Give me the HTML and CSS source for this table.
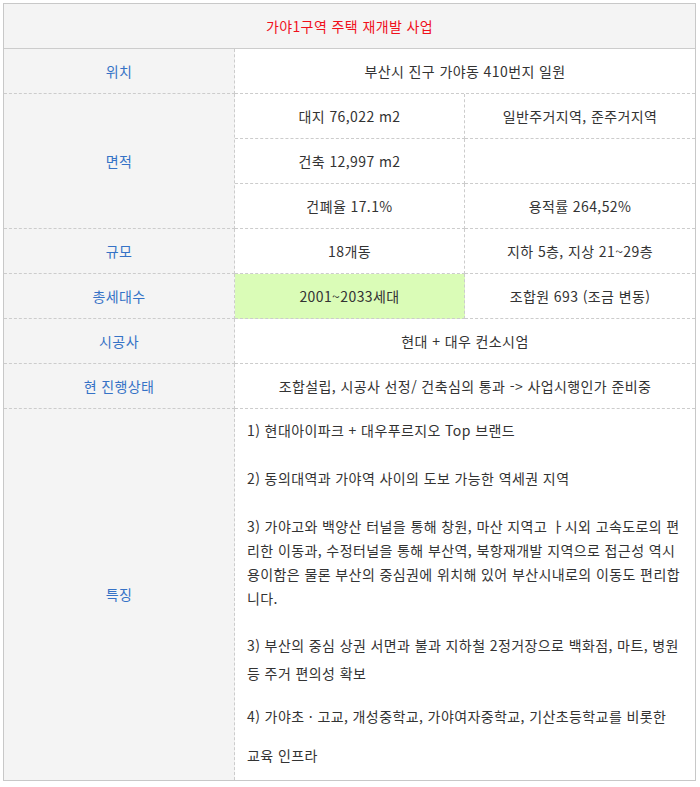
FILE: index.html
```html
<!DOCTYPE html>
<html lang="ko">
<head>
<meta charset="utf-8">
<title>가야1구역 주택 재개발 사업</title>
<link rel="stylesheet" href="styles.css">
</head>
<body>
<div class="tbl">
  <div class="cell head span3">가야1구역 주택 재개발 사업</div>

  <div class="cell label">위치</div>
  <div class="cell val span2">부산시 진구 가야동 410번지 일원</div>

  <div class="cell label rows3">면적</div>
  <div class="cell val">대지 76,022 m2</div>
  <div class="cell val end">일반주거지역, 준주거지역</div>
  <div class="cell val">건축 12,997 m2</div>
  <div class="cell val end"></div>
  <div class="cell val">건폐율 17.1%</div>
  <div class="cell val end">용적률 264,52%</div>

  <div class="cell label">규모</div>
  <div class="cell val">18개동</div>
  <div class="cell val end">지하 5층, 지상 21~29층</div>

  <div class="cell label">총세대수</div>
  <div class="cell val green">2001~2033세대</div>
  <div class="cell val end">조합원 693 (조금 변동)</div>

  <div class="cell label">시공사</div>
  <div class="cell val span2">현대 + 대우 컨소시엄</div>

  <div class="cell label">현 진행상태</div>
  <div class="cell val span2">조합설립, 시공사 선정/ 건축심의 통과 -&gt; 사업시행인가 준비중</div>

  <div class="cell label last">특징</div>
  <div class="cell desc span2 last">
    <p>1) 현대아이파크 + 대우푸르지오 Top 브랜드</p>
    <p>2) 동의대역과 가야역 사이의 도보 가능한 역세권 지역</p>
    <p class="p3">3) 가야고와 백양산 터널을 통해 창원, 마산 지역고 ㅏ시외 고속도로의 편<br>리한 이동과, 수정터널을 통해 부산역, 북항재개발 지역으로 접근성 역시<br>용이함은 물론 부산의 중심권에 위치해 있어 부산시내로의 이동도 편리합<br>니다.</p>
    <p class="p3b">3) 부산의 중심 상권 서면과 불과 지하철 2정거장으로 백화점, 마트, 병원<br>등 주거 편의성 확보</p>
    <p class="p4">4) 가야초 · 고교, 개성중학교, 가야여자중학교, 기산초등학교를 비롯한<br>교육 인프라</p>
  </div>
</div>
</body>
</html>
```

FILE: styles.css
```css
html, body {
  margin: 0;
  padding: 0;
  background: #ffffff;
}

body {
  font-family: "Noto Sans CJK KR", "Noto Sans", sans-serif;
  font-size: 14px;
  letter-spacing: 0.4px;
  color: #333333;
}

.tbl {
  display: grid;
  grid-template-columns: 231px 230px 230px;
  grid-template-rows: 45px 45px 45px 45px 45px 45px 45px 45px 45px 371px;
  width: 693px;
  box-sizing: border-box;
  margin: 3px;
  border: 1px solid #c8c8c8;
}

.cell {
  box-sizing: border-box;
  display: flex;
  align-items: center;
  justify-content: center;
  border-bottom: 1px dashed #cccccc;
  white-space: nowrap;
  padding-bottom: 1px;
}

.head {
  background: #f4f4f4;
  color: #f0101c;
  border-bottom: 1px solid #cccccc;
}

.span3 { grid-column: span 3; }
.span2 { grid-column: span 2; }
.rows3 { grid-row: span 3; }

.label {
  background: #f4f4f4;
  color: #3572c6;
  border-right: 1px dashed #cccccc;
}

.val {
  border-right: 1px dashed #cccccc;
}

.val.span2,
.val.end {
  border-right: none;
}

.green {
  background: #dafcb7;
}

.last {
  border-bottom: none;
}

.desc {
  display: block;
  padding: 9px 0 0 12px;
  line-height: 24px;
}

.desc p {
  margin: 0 0 24px 0;
}

.desc .p3 {
  margin-bottom: 21px;
}

.desc .p3b {
  line-height: 28px;
  margin-bottom: 10px;
}

.desc .p4 {
  line-height: 39px;
  margin-bottom: 0;
}
```
